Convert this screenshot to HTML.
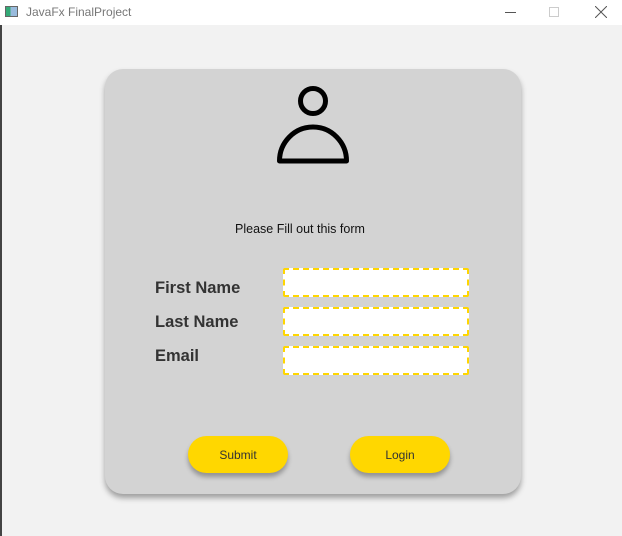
<!DOCTYPE html>
<html><head><meta charset="utf-8"><style>
*{margin:0;padding:0;box-sizing:border-box}
body{width:622px;height:536px;background:#f2f2f2;font-family:"Segoe UI","Liberation Sans",sans-serif;position:relative;overflow:hidden}
.tb{position:absolute;left:0;top:0;width:622px;height:25px;background:#fff}
.tb .t{position:absolute;left:26px;top:5px;font-size:12px;color:#777}
.card{position:absolute;left:105px;top:69px;width:416px;height:425px;background:#d3d3d3;border-radius:18px;box-shadow:0 4px 6px rgba(0,0,0,.35)}
.lbl{position:absolute;left:155px;font-size:16.5px;font-weight:bold;color:#333}
.in{position:absolute;left:283px;width:186px;height:29px;background:#fff;border:2px dashed #ffd600;border-radius:2px}
.btn{position:absolute;top:436px;width:100px;height:37px;background:#ffd700;border-radius:19px;box-shadow:0 4px 5px rgba(0,0,0,.3);font-size:12px;color:#333;text-align:center;line-height:39px}
</style></head><body>
<div class="tb">
<div style="position:absolute;left:5px;top:6px;width:13px;height:11px;border:1px solid #666;background:linear-gradient(90deg,#3a7 0 40%,#9bd 40%)"></div>
<div class="t">JavaFx FinalProject</div>
<div style="position:absolute;left:505px;top:12px;width:11px;height:1px;background:#555"></div>
<div style="position:absolute;left:549px;top:7px;width:10px;height:10px;border:1px solid #ccc"></div>
<svg style="position:absolute;left:595px;top:6px" width="12" height="12"><path d="M0 0L12 12M12 0L0 12" stroke="#555" stroke-width="1"/></svg>
</div>
<div style="position:absolute;left:0;top:25px;width:2px;height:511px;background:#444"></div>
<div class="card"></div>
<svg style="position:absolute;left:270px;top:80px" width="90" height="90">
<circle cx="43" cy="21" r="12.5" fill="none" stroke="#000" stroke-width="5"/>
<path d="M9.5 81 A33.5 34 0 0 1 76.5 81 Z" fill="none" stroke="#000" stroke-width="5" stroke-linejoin="round"/>
</svg>
<div style="position:absolute;left:235px;top:222px;font-size:12.5px;color:#111">Please Fill out this form</div>
<div class="lbl" style="top:279px">First Name</div>
<div class="lbl" style="top:313px">Last Name</div>
<div class="lbl" style="top:347px">Email</div>
<div class="in" style="top:268px"></div>
<div class="in" style="top:307px"></div>
<div class="in" style="top:346px"></div>
<div class="btn" style="left:188px">Submit</div>
<div class="btn" style="left:350px">Login</div>
</body></html>
